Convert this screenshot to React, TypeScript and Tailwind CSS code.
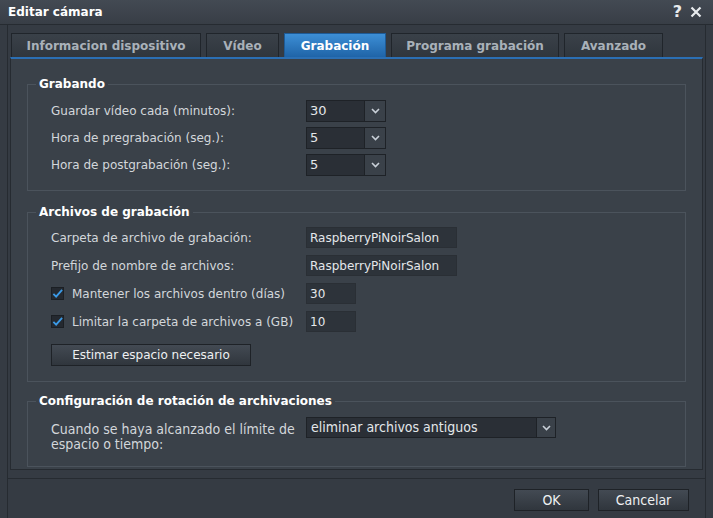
import React from "react";

const tabs = [
  { label: "Informacion dispositivo", w: "w-[190px]" },
  { label: "Vídeo", w: "w-[73px]" },
  { label: "Grabación", w: "w-[102px]" },
  { label: "Programa grabación", w: "w-[168px]" },
  { label: "Avanzado", w: "w-[99px]" },
];

function Chevron() {
  return (
    <svg width="9" height="6" viewBox="0 0 9 6" className="block">
      <path d="M1 1 L4.5 4.5 L8 1" fill="none" stroke="#c9d0d8" strokeWidth="1.6" />
    </svg>
  );
}

function Select({ value, width }: { value: string; width: string }) {
  return (
    <div className={`flex h-[22px] ${width} border border-[#1e2227] bg-[#2a2f36]`}>
      <div className="flex flex-1 items-center pl-[3px] text-[13px] text-[#e4e7ea]">{value}</div>
      <div className="flex w-[21px] items-center justify-center border-l border-[#1e2227] bg-[#3a4149]">
        <Chevron />
      </div>
    </div>
  );
}

function TextBox({ value, width }: { value: string; width: string }) {
  return (
    <div className={`flex h-[21px] ${width} items-center border border-[#2a2f35] bg-[#2d333a] pl-[3px] text-[12px] text-[#e4e7ea]`}>
      {value}
    </div>
  );
}

function Check() {
  return (
    <div className="flex h-[13px] w-[13px] items-center justify-center border border-[#1b1f24] bg-[#242930]">
      <svg width="12" height="11" viewBox="0 0 12 11" className="block">
        <path d="M1.5 6 L4.5 9 L11 1.5" fill="none" stroke="#3b9ae6" strokeWidth="2" />
      </svg>
    </div>
  );
}

function Group({ title, className, children }: { title: string; className: string; children: React.ReactNode }) {
  return (
    <fieldset className={`border border-[#4b535c] px-[23px] ${className}`}>
      <legend className="ml-[-15px] px-[3px] text-[12px] font-bold leading-[16px] text-white">{title}</legend>
      {children}
    </fieldset>
  );
}

function Row({ label, children }: { label: React.ReactNode; children: React.ReactNode }) {
  return (
    <div className="flex items-center">
      <div className="w-[255px] text-[12px] text-[#d3d7db]">{label}</div>
      {children}
    </div>
  );
}

const btn =
  "flex h-[22px] items-center justify-center border border-[#1e2227] bg-gradient-to-b from-[#434a53] to-[#30363d] text-[#eef0f2]";

export default function App() {
  return (
    <div className="flex h-[518px] w-[713px] flex-col overflow-hidden bg-[#353b43] font-['DejaVu_Sans',sans-serif]">
      <div className="flex h-[25px] items-center justify-between border-b border-[#262b31] bg-gradient-to-b from-[#434a53] to-[#383e46] pl-[8px] pr-[11px]">
        <span className="text-[12px] font-bold text-white">Editar cámara</span>
        <div className="flex items-center gap-[8px]">
          <span className="text-[16px] font-bold leading-none text-[#e8ebee]">?</span>
          <svg width="12" height="12" viewBox="0 0 12 12" className="block">
            <path d="M1.5 1.5 L10.5 10.5 M10.5 1.5 L1.5 10.5" stroke="#e8ebee" strokeWidth="2.2" />
          </svg>
        </div>
      </div>

      <div className="mx-[7px] flex flex-1 flex-col border-x border-[#262b31] pt-[8px]">
        <div className="flex h-[24px] gap-[5px] pl-[3px]">
          {tabs.map((t) => {
            const active = t.label === "Grabación";
            return (
              <div
                key={t.label}
                className={
                  active
                    ? `flex ${t.w} items-center justify-center border border-b-0 border-[#1e5b97] bg-gradient-to-b from-[#3d8fd6] to-[#1f64a8] text-[12px] font-bold text-white`
                    : `flex ${t.w} items-center justify-center border border-b-0 border-[#20252b] bg-gradient-to-b from-[#3a4149] to-[#30363d] text-[12px] font-bold text-[#a9b1b9]`
                }
              >
                {t.label}
              </div>
            );
          })}
        </div>

        <div className="mx-[2px] flex flex-col border-x border-b border-[#262b31] border-t-2 border-t-[#2b6fb4] bg-[#3a4149] px-[16px] pb-[2px] pt-[17px]">
          <Group title="Grabando" className="pb-[14px] pt-[1px]">
            <div className="flex flex-col gap-[5px] pt-[7px]">
              <Row label="Guardar vídeo cada (minutos):">
                <Select value="30" width="w-[80px]" />
              </Row>
              <Row label="Hora de pregrabación (seg.):">
                <Select value="5" width="w-[80px]" />
              </Row>
              <Row label="Hora de postgrabación (seg.):">
                <Select value="5" width="w-[80px]" />
              </Row>
            </div>
          </Group>

          <Group title="Archivos de grabación" className="mt-[13px] pb-[15px]">
            <div className="flex flex-col gap-[7px] pt-[7px]">
              <Row label="Carpeta de archivo de grabación:">
                <TextBox value="RaspberryPiNoirSalon" width="w-[151px]" />
              </Row>
              <Row label="Prefijo de nombre de archivos:">
                <TextBox value="RaspberryPiNoirSalon" width="w-[151px]" />
              </Row>
              <Row
                label={
                  <div className="flex items-center gap-[8px]">
                    <Check />
                    <span>Mantener los archivos dentro (días)</span>
                  </div>
                }
              >
                <TextBox value="30" width="w-[50px]" />
              </Row>
              <Row
                label={
                  <div className="flex items-center gap-[8px]">
                    <Check />
                    <span>Limitar la carpeta de archivos a (GB)</span>
                  </div>
                }
              >
                <TextBox value="10" width="w-[50px]" />
              </Row>
            </div>
            <button className={`${btn} mt-[12px] w-[200px] text-[12px]`}>Estimar espacio necesario</button>
          </Group>

          <Group title="Configuración de rotación de archivaciones" className="mt-[11px] pb-[14px]">
            <div className="flex items-start pt-[8px] font-['DejaVu_Sans_Condensed','DejaVu_Sans',sans-serif]">
              <div className="mt-[5px] w-[255px] text-[14px] leading-[15px] text-[#d3d7db]">
                Cuando se haya alcanzado el límite de
                <br />
                espacio o tiempo:
              </div>
              <div className="flex h-[21px] w-[250px] border border-[#1e2227] bg-[#2a2f36]">
                <div className="flex flex-1 items-center pl-[4px] text-[14px] text-[#e4e7ea]">
                  eliminar archivos antiguos
                </div>
                <div className="flex w-[19px] items-center justify-center border-l border-[#1e2227] bg-[#3a4149]">
                  <Chevron />
                </div>
              </div>
            </div>
          </Group>
        </div>

        <div className="mt-[8px] flex flex-1 items-start justify-end gap-[9px] border-t border-[#262b31] pr-[16px] pt-[10px] font-['DejaVu_Sans_Condensed','DejaVu_Sans',sans-serif]">
          <button className={`${btn} w-[75px] text-[14px]`}>OK</button>
          <button className={`${btn} w-[91px] text-[14px]`}>Cancelar</button>
        </div>
      </div>
    </div>
  );
}
